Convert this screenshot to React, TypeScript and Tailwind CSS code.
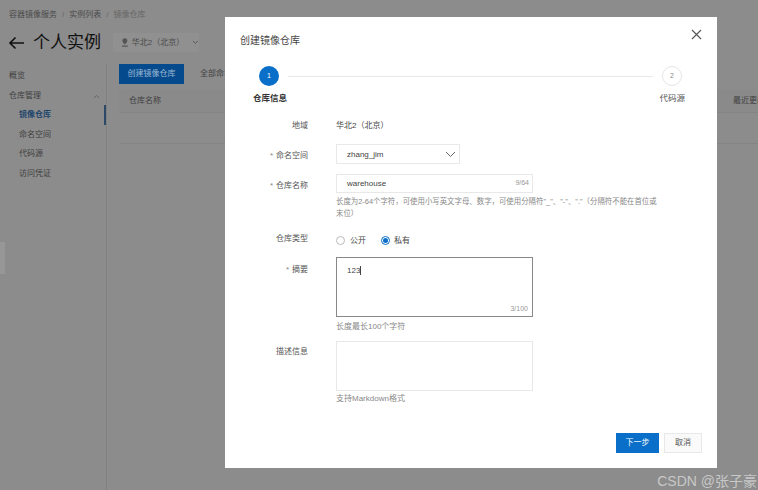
const font = { fontFamily: '"Liberation Sans", "Noto Sans CJK SC", sans-serif' };

const sideItems = ["镜像仓库", "命名空间", "代码源", "访问凭证"];

function Background() {
  return (
    <div className="flex h-[490px] w-[758px] flex-col overflow-hidden bg-[#8c8c8c] text-[#3a3a3a]">
      <div className="flex h-[30px] items-center gap-[5px] pl-[9px] text-[8px] text-[#4a4a4a]">
        <span>容器镜像服务</span>
        <span className="text-[#666]">/</span>
        <span>实例列表</span>
        <span className="text-[#666]">/</span>
        <span className="text-[#666]">镜像仓库</span>
      </div>
      <div className="mb-[9px] flex h-[25px] items-center pl-[8px]">
        <svg width="17" height="14" viewBox="0 0 17 14" fill="none" stroke="#111" strokeWidth="1.6">
          <path d="M16 7H2M7.500 1.500 2 7l5.500 5.500" />
        </svg>
        <span className="ml-[8px] text-[17px] leading-none text-[#111]">个人实例</span>
        <div className="ml-[12px] flex h-[19px] w-[86px] items-center bg-[#909090] pl-[8px] text-[8px] text-[#4a4a4a]">
          <svg width="8" height="9" viewBox="0 0 8 9" fill="#555"><path d="M4 0a2.600 2.600 0 0 1 2.600 2.600C6.600 4.400 4 6.500 4 6.500S1.400 4.400 1.400 2.600A2.600 2.600 0 0 1 4 0ZM1 7.500h6V9H1Z" /></svg>
          <span className="ml-[3px]">华北2（北京）</span>
          <svg className="ml-[10px]" width="7" height="5" viewBox="0 0 7 5" fill="none" stroke="#555"><path d="m1 1 2.500 2.500L6 1" /></svg>
        </div>
      </div>
      <div className="flex flex-1">
        <aside className="relative w-[107px] border-r border-[#808080] text-[8px] text-[#3f3f3f]">
          <div className="pl-[9px] pt-[6px] leading-[12px]">概览</div>
          <div className="flex items-center justify-between pl-[9px] pr-[6px] pt-[8px] leading-[12px]">
            <span>仓库管理</span>
            <svg width="7" height="5" viewBox="0 0 7 5" fill="none" stroke="#666"><path d="m1 4 2.500-2.500L6 4" /></svg>
          </div>
          <div className="mt-[3px] flex flex-col">
            {sideItems.map((item, i) => (
              <div
                key={item}
                className={`flex h-[19.700px] items-center pl-[19px] ${i === 0 ? "border-r-2 border-[#2c4a68] font-bold text-[#21466c]" : ""}`}
              >
                {item}
              </div>
            ))}
          </div>
        </aside>
        <main className="flex-1 pl-[12px] text-[8px] text-[#3f3f3f]">
          <div className="flex items-center">
            <div className="flex h-[20px] w-[65px] items-center justify-center bg-[#064a8e] text-[#9db8d3]">创建镜像仓库</div>
            <span className="ml-[16px]">全部命名空间</span>
          </div>
          <div className="mt-[5px] flex h-[24px] items-center justify-between border-b border-[#848484] bg-[#8a8a8a] pl-[10px]">
            <span>仓库名称</span>
            <span className="w-[25px] overflow-hidden whitespace-nowrap">最近更新</span>
          </div>
          <div className="h-[31px] border-b border-[#848484]" />
        </main>
      </div>
    </div>
  );
}

function Row({ label, required, className, labelClass, children }: { label: string; required?: boolean; className: string; labelClass: string; children: React.ReactNode }) {
  return (
    <div className={`flex ${className}`}>
      <div className={`flex w-[83px] justify-end text-[8px] leading-[11px] text-[#555] ${labelClass}`}>
        {required && <span className="mr-[3px] text-[#888]">*</span>}
        {label}
      </div>
      <div className="ml-[28px] text-[8px] text-[#555]">{children}</div>
    </div>
  );
}

function Step({ n, active }: { n: number; active?: boolean }) {
  return (
    <div
      className={`flex h-[20px] w-[20px] shrink-0 items-center justify-center rounded-full text-[7px] ${
        active ? "bg-[#0a6fc9] text-white" : "border border-[#e5e5e5] bg-white text-[#888]"
      }`}
    >
      {n}
    </div>
  );
}

function Dialog() {
  return (
    <div className="absolute left-[225px] top-[17px] flex h-[451px] w-[492px] flex-col bg-white">
      <div className="flex items-start justify-between px-[15px] pt-[17px]">
        <span className="text-[10px] leading-[14px] text-[#444]">创建镜像仓库</span>
        <svg className="mt-[-5px]" width="11" height="11" viewBox="0 0 11 11" fill="none" stroke="#555" strokeWidth="1.100">
          <path d="m1 1 9 9M10 1l-9 9" />
        </svg>
      </div>
      <div className="ml-[34px] mr-[35px] mt-[18px] flex items-center">
        <Step n={1} active />
        <div className="mx-[9px] h-px flex-1 bg-[#e8e8e8]" />
        <Step n={2} />
      </div>
      <div className="ml-[28px] mr-[32px] mt-[6px] flex justify-between text-[8.500px] leading-[12px]">
        <span className="font-bold text-[#333]">仓库信息</span>
        <span className="text-[#555]">代码源</span>
      </div>

      <div className="flex flex-col">
        <Row label="地域" className="mt-[11px]" labelClass="pt-[5px]">
          <div className="pt-[5px] leading-[11px] text-[#444]">华北2（北京）</div>
        </Row>
        <Row label="命名空间" required className="mt-[13px]" labelClass="pt-[6px]">
          <div className="flex h-[20px] w-[124px] items-center justify-between border border-[#e8e8e8] pl-[10px] pr-[3px] text-[#444]">
            <span className="pt-[1px]">zhang_jim</span>
            <svg width="11" height="7" viewBox="0 0 11 7" fill="none" stroke="#666"><path d="m1 1 4.500 4.500L10 1" /></svg>
          </div>
        </Row>
        <Row label="仓库名称" required className="mt-[10px]" labelClass="pt-[6px]">
          <div className="flex h-[19px] w-[197px] items-center justify-between border border-[#e8e8e8] pl-[10px] pr-[3px] text-[#444]">
            <span>warehouse</span>
            <span className="text-[7px] text-[#999]">9/64</span>
          </div>
          <p className="mt-[3px] whitespace-nowrap text-[7.420px] leading-[12px] text-[#888]">
            长度为2-64个字符，可使用小写英文字母、数字，可使用分隔符"_"、"-"、"."（分隔符不能在首位或
            <br />
            末位）
          </p>
        </Row>
        <Row label="仓库类型" className="mt-[10px]" labelClass="pt-[3px]">
          <div className="flex h-[16px] items-center pt-[5px] text-[#444]">
            <span className="h-[9px] w-[9px] rounded-full border border-[#bbb]" />
            <span className="ml-[5px]">公开</span>
            <span className="ml-[15px] flex h-[9px] w-[9px] items-center justify-center rounded-full border border-[#0a6fc9]">
              <span className="h-[5px] w-[5px] rounded-full bg-[#0a6fc9]" />
            </span>
            <span className="ml-[4px]">私有</span>
          </div>
        </Row>
        <Row label="摘要" required className="mt-[11px]" labelClass="pt-[7px]">
          <div className="relative h-[60px] w-[197px] border border-[#888] pl-[10px] pt-[7px] leading-[11px] text-[#444]">
            <span className="border-r border-[#444]">123</span>
            <span className="absolute bottom-[2px] right-[4px] text-[7px] text-[#999]">3/100</span>
          </div>
          <p className="mt-[4px] leading-[12px] text-[#888]">长度最长100个字符</p>
        </Row>
        <Row label="描述信息" className="mt-[8px]" labelClass="pt-[5px]">
          <div className="h-[50px] w-[197px] border border-[#e8e8e8]" />
          <p className="mt-[2px] leading-[12px] text-[#888]">支持Markdown格式</p>
        </Row>
      </div>

      <div className="mt-auto flex justify-end gap-[5px] pb-[15px] pr-[15px] text-[8px]">
        <button className="h-[20px] w-[43px] bg-[#0a6fc9] text-white">下一步</button>
        <button className="h-[20px] w-[38px] border border-[#e8e8e8] bg-[#fafafa] text-[#555]">取消</button>
      </div>
    </div>
  );
}

export default function App() {
  return (
    <div className="relative h-[490px] w-[758px] overflow-hidden" style={font}>
      <Background />
      <div className="absolute left-0 top-[242px] h-[32px] w-[5px] bg-[#979797]" />
      <Dialog />
      <span className="absolute bottom-[2px] right-[1px] text-[14px] leading-[14px] text-[#c8c8c8]">CSDN @张子豪</span>
    </div>
  );
}
